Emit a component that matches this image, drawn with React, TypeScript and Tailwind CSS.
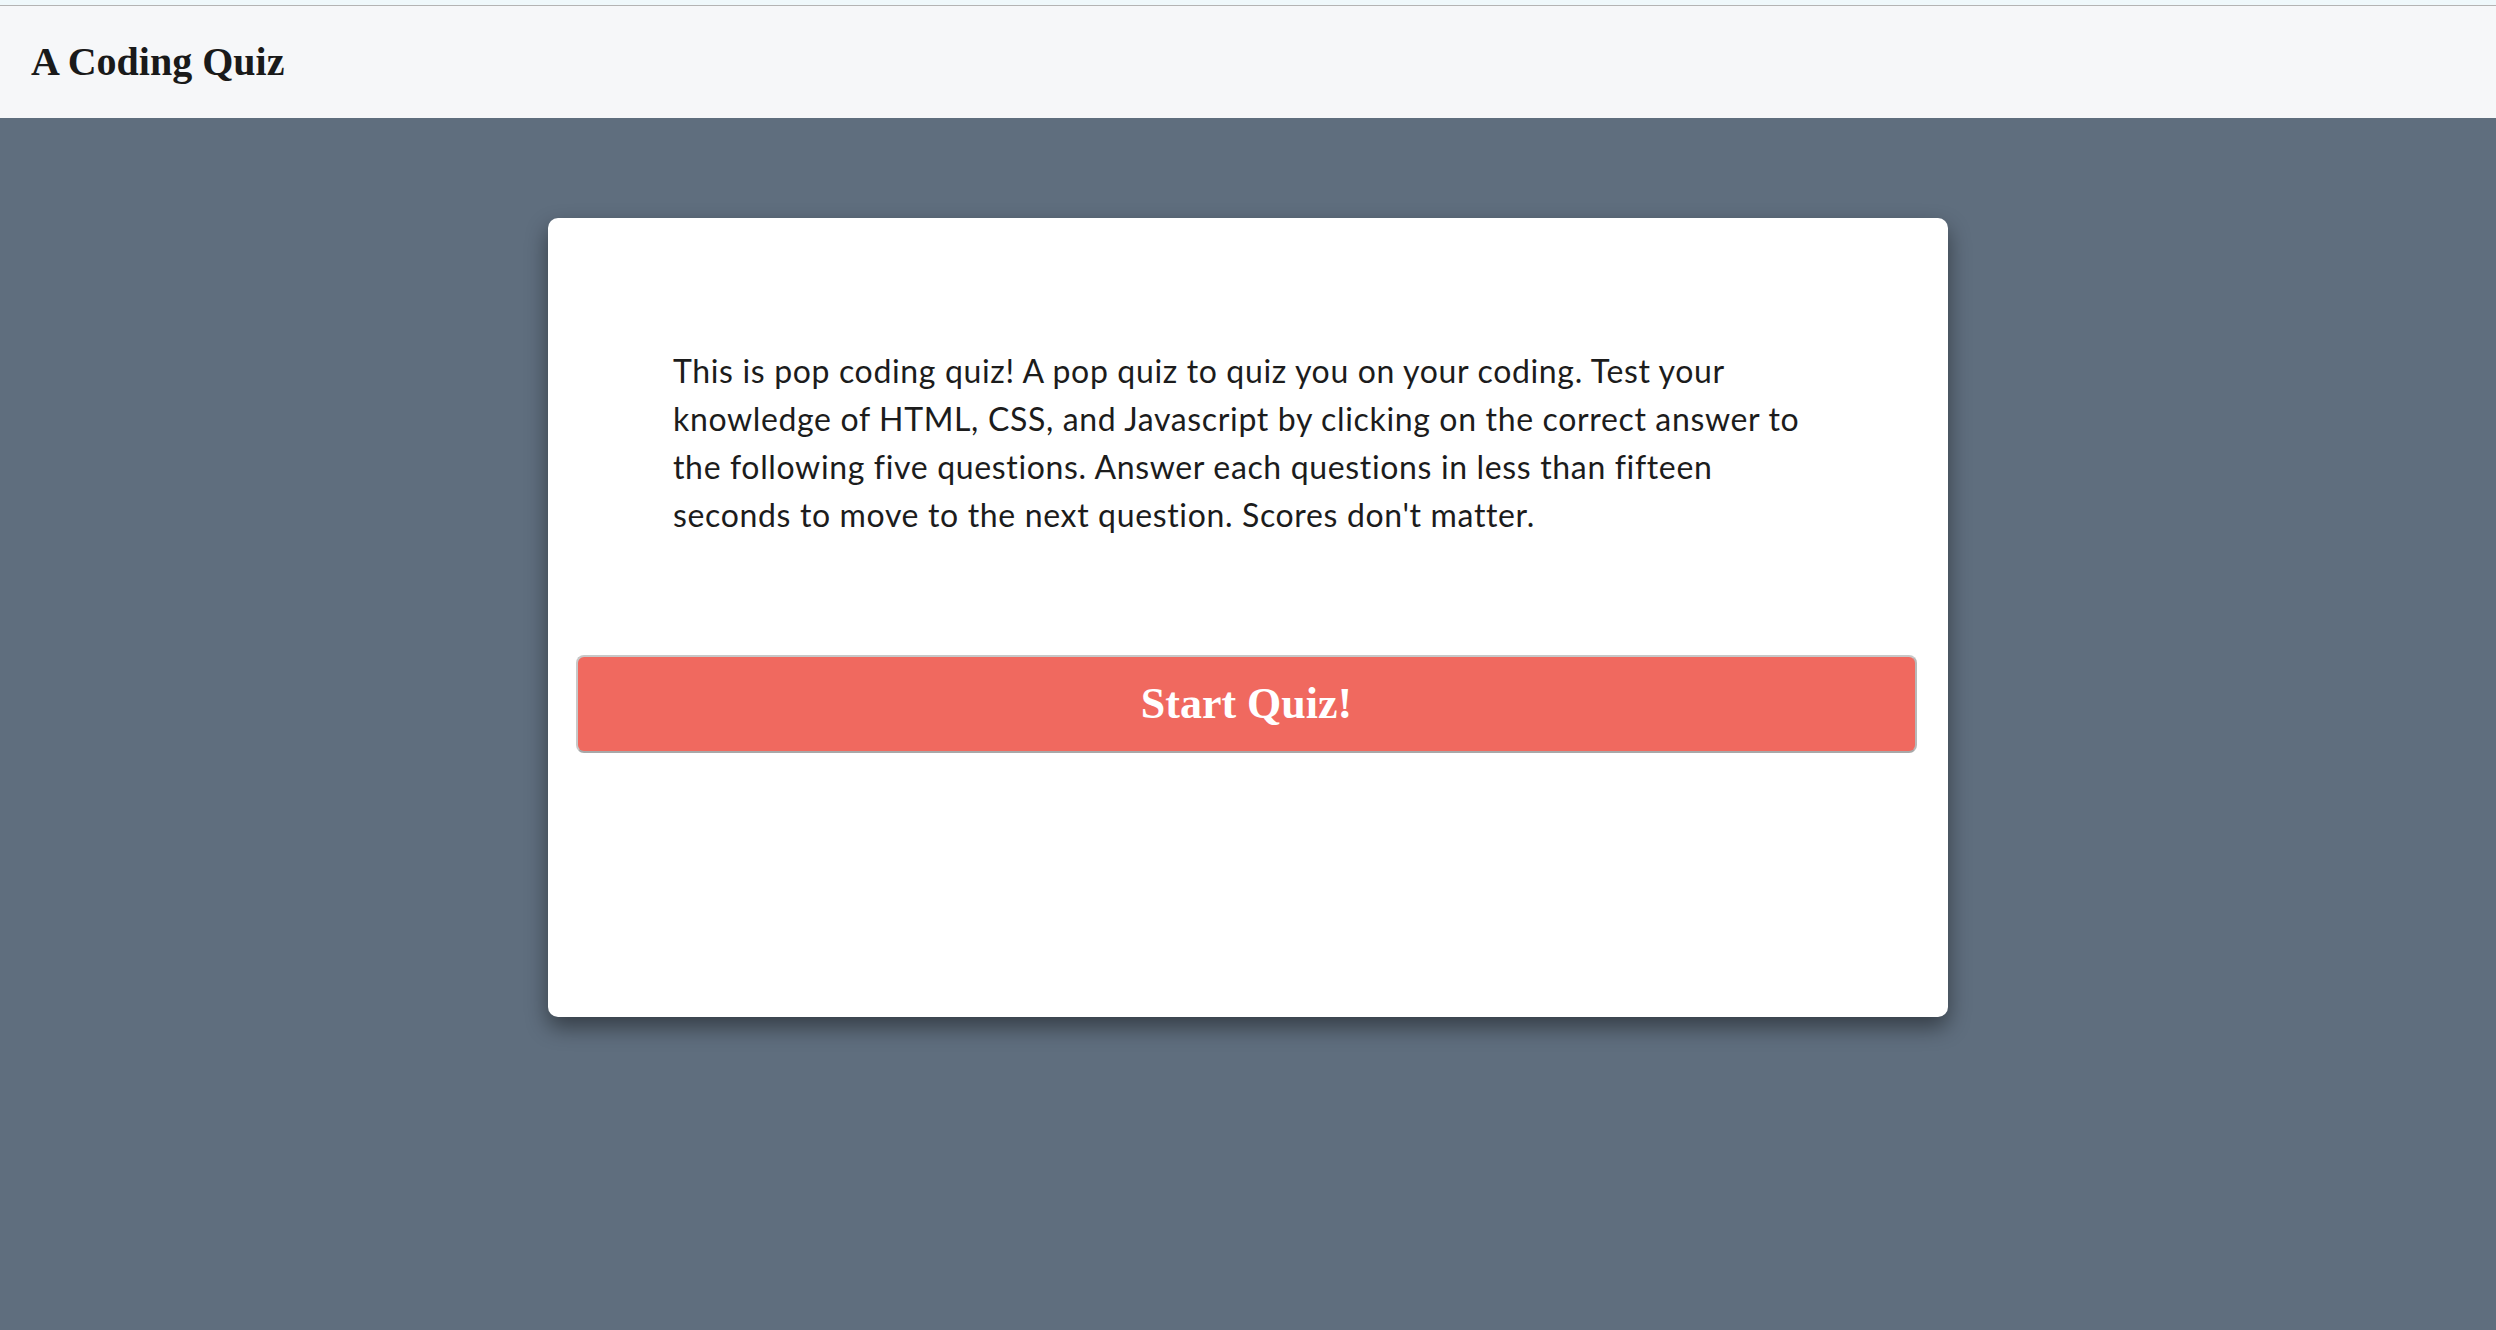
export default function App() {
  return (
    <div className="min-h-[1330px] w-full bg-[#5f6e7e] flex flex-col">
      <div className="h-[5px] bg-[#eff8fb]" />
      <div className="h-px bg-[#b4b4b4]" />
      <header className="h-[112px] bg-[#f6f7f9] flex items-center pl-[31px]">
        <h1 className="text-[40px] font-bold text-[#1a1a1a] leading-none" style={{ fontFamily: '"Liberation Serif", "DejaVu Serif", serif' }}>
          A Coding Quiz
        </h1>
      </header>
      <main className="flex justify-center pt-[100px]">
        <div className="w-[1400px] h-[799px] bg-white rounded-[10px] shadow-[0_10px_22px_rgba(0,0,0,0.45)] px-[28px] pt-[129px] flex flex-col">
          <p className="mx-auto w-[1150px] text-[32px] leading-[48px] tracking-[0.65px] text-[#1c1c1c]" style={{ fontFamily: 'Lato, "Noto Sans", sans-serif' }}>
            This is pop coding quiz! A pop quiz to quiz you on your coding. Test your knowledge of HTML, CSS, and Javascript by clicking on the correct answer to the following five questions. Answer each questions in less than fifteen seconds to move to the next question. Scores don't matter.
          </p>
          <button className="mt-[116px] w-[1341px] h-[98px] bg-[#f0695f] rounded-[8px] border-2 border-[#c8c8c8] border-b-[#a8a8a8] border-r-[#b8b8b8] text-white text-[44px] font-bold flex items-center justify-center" style={{ fontFamily: '"Liberation Serif", "DejaVu Serif", serif' }}>
            Start Quiz!
          </button>
        </div>
      </main>
    </div>
  );
}
